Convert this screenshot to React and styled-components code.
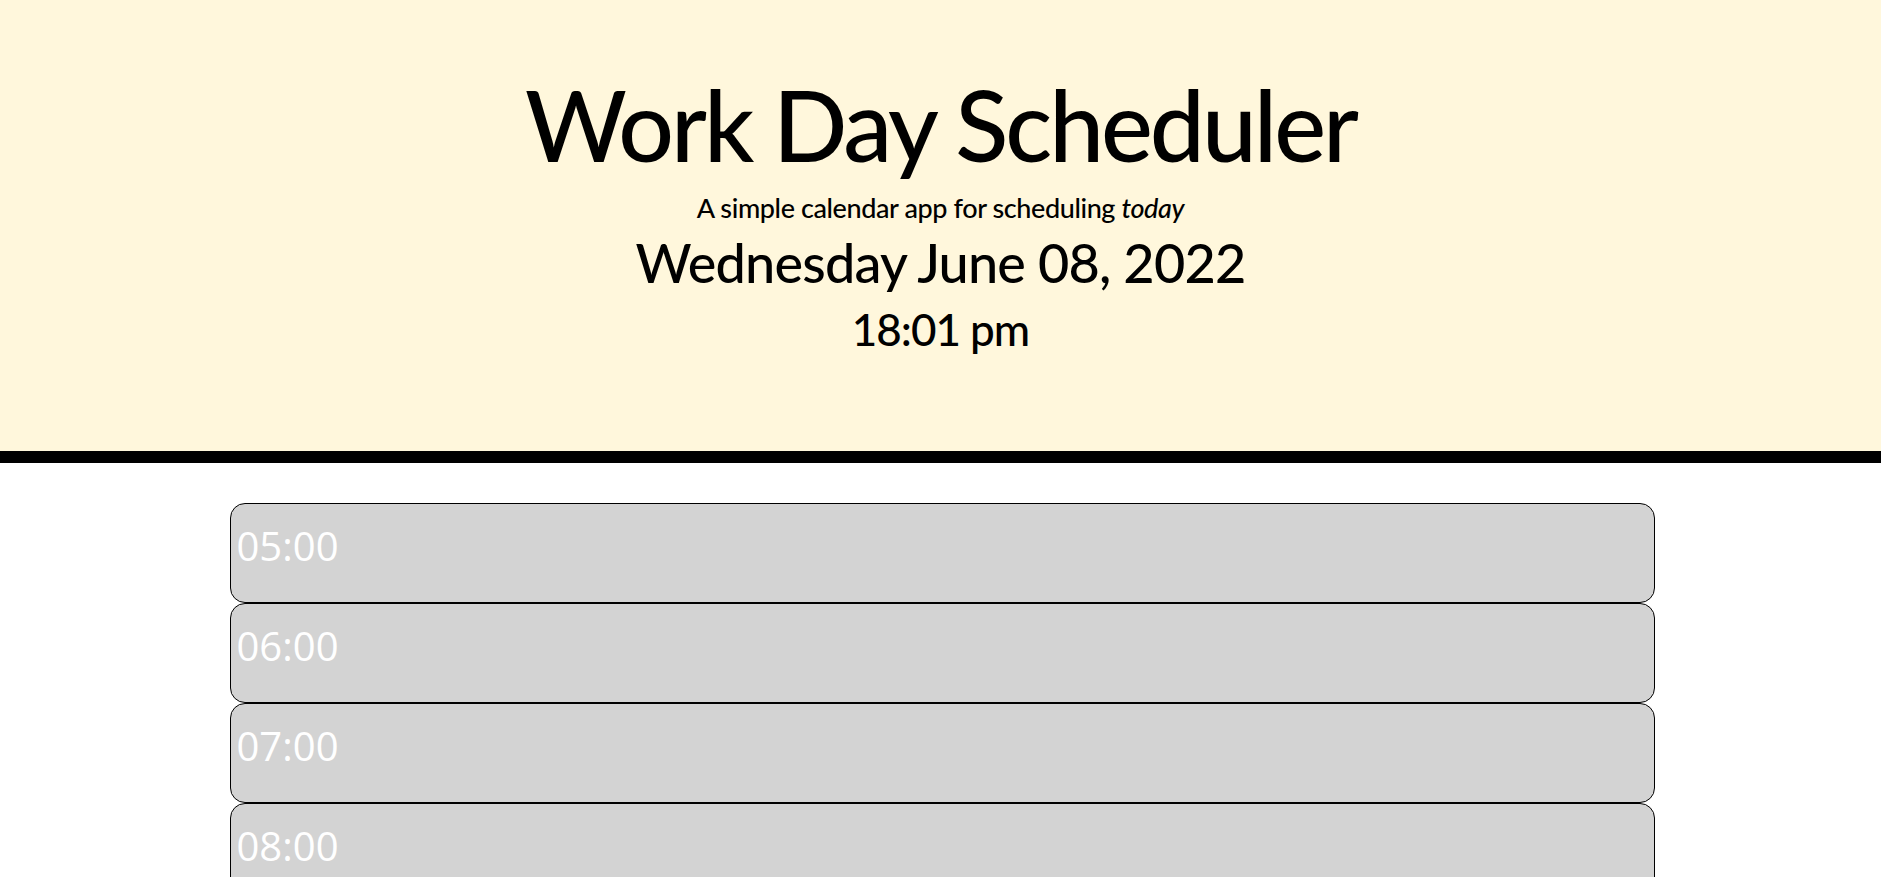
import React from 'react';
import styled, { createGlobalStyle } from 'styled-components';

const GlobalStyle = createGlobalStyle`
  body {
    margin: 0;
    background: #ffffff;
    font-family: "Open Sans", sans-serif;
  }
`

const Header = styled.header`
  background: #fff7dc;
  border-bottom: 12px solid #000;
  padding: 75px 0 100px;
  text-align: center;
  font-family: Lato, "Liberation Sans", sans-serif;
  font-weight: 500;
  color: #000;
`
const Title = styled.h1`
  margin: 0;
  font-size: 98px;
  font-weight: 500;
  line-height: 1;
  letter-spacing: -3px;
`
const Lead = styled.p`
  margin: 21px 0 0;
  font-size: 27px;
  line-height: 1;
  letter-spacing: -0.4px;
  em {
    font-style: italic;
  }
`
const DateLine = styled.p`
  margin: 15px 0 0;
  font-size: 54px;
  line-height: 1;
  letter-spacing: -0.8px;
`
const Clock = styled.p`
  margin: 17px 0 0;
  font-size: 44px;
  line-height: 1;
  letter-spacing: -1px;
`

const Schedule = styled.main`
  width: 1425px;
  margin: 40px 0 40px calc(50% - 711px);
  display: flex;
  flex-direction: column;
`
const HourRow = styled.div`
  box-sizing: border-box;
  height: 100px;
  padding: 22px 0 0 6px;
  border: 1px solid #000;
  border-radius: 15px;
  background: ${p => p.bg || '#d3d3d3'};
`
const HourLabel = styled.span`
  font-family: "Open Sans", sans-serif;
  font-size: 40px;
  line-height: 1;
  color: #fff;
`

const hours = ['05', '06', '07', '08', '09', '10', '11', '12', '13', '14', '15', '16', '17'];

export default function App() {
  return (
    <>
      <GlobalStyle />
      <Header>
        <Title>Work Day Scheduler</Title>
        <Lead>A simple calendar app for scheduling <em>today</em></Lead>
        <DateLine>Wednesday June 08, 2022</DateLine>
        <Clock>18:01 pm</Clock>
      </Header>
      <Schedule>
        {hours.map(h => (
          <HourRow key={h}>
            <HourLabel>{h}:00</HourLabel>
          </HourRow>
        ))}
      </Schedule>
    </>
  );
}
